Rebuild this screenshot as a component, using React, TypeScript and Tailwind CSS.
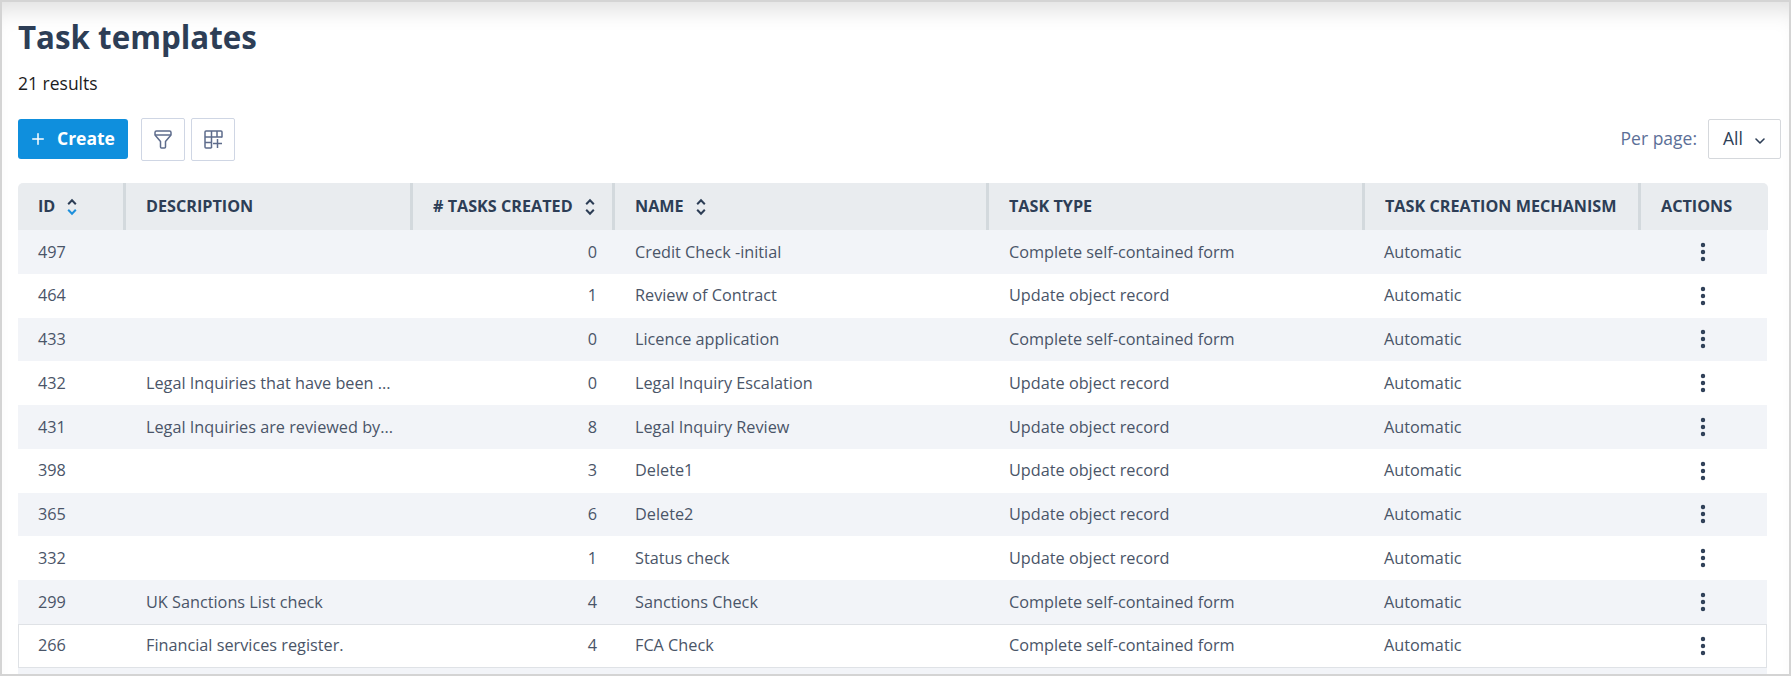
import { ChevronDown, EllipsisVertical, Plus } from "lucide-react";
import React from "react";

const cols = "grid-cols-[108px_287px_202px_374px_376px_276px_126px]";

const rows = [
  ["497", "", "0", "Credit Check -initial", "Complete self-contained form"],
  ["464", "", "1", "Review of Contract", "Update object record"],
  ["433", "", "0", "Licence application", "Complete self-contained form"],
  ["432", "Legal Inquiries that have been ...", "0", "Legal Inquiry Escalation", "Update object record"],
  ["431", "Legal Inquiries are reviewed by...", "8", "Legal Inquiry Review", "Update object record"],
  ["398", "", "3", "Delete1", "Update object record"],
  ["365", "", "6", "Delete2", "Update object record"],
  ["332", "", "1", "Status check", "Update object record"],
  ["299", "UK Sanctions List check", "4", "Sanctions Check", "Complete self-contained form"],
  ["266", "Financial services register.", "4", "FCA Check", "Complete self-contained form"],
];

const SortIcon = ({ active }: { active?: boolean }) => (
  <svg width="10" height="18" viewBox="0 0 10 18" fill="none" strokeWidth="2" className="shrink-0">
    <path d="M1.2 6.2L5 2.2l3.8 4" stroke="#2d3e56" />
    <path d="M1.2 11.8l3.8 4 3.8-4" stroke={active ? "#1e90dc" : "#2d3e56"} />
  </svg>
);

const HeadCell = ({ label, sort, active, last }: { label: string; sort?: boolean; active?: boolean; last?: boolean }) => (
  <div
    className={`flex items-center gap-[12px] pl-[20px] text-[16.2px] font-bold text-[#2d3e56] ${last ? "" : "border-r-[3px] border-[#d3d9dd]"}`}
  >
    <span className="pb-[1px] whitespace-nowrap">{label}</span>
    {sort && <SortIcon active={active} />}
  </div>
);

export default function App() {
  return (
    <div className="h-[676px] overflow-hidden border-[2px] border-[#d4d4d4] bg-white pl-4 pr-[21px] font-['Open_Sans',sans-serif] shadow-[inset_0_22px_22px_-14px_rgba(0,0,0,0.13)]">
      <h1 className="pt-[15px] text-[31.3px] leading-[40px] font-bold text-[#2d3e56]">Task templates</h1>
      <p className="mt-[14px] text-[17.5px] leading-[24px] text-[#1c1c1c]">21 results</p>

      <div className="mt-[22px] flex h-[44px] items-center">
        <button className="flex h-[40px] w-[110px] items-center gap-[10px] rounded-[3px] bg-[#0f8fdd] pl-[11px] text-[17.5px] font-bold text-white">
          <Plus size={18} strokeWidth={2} />
          <span className="pb-[2px]">Create</span>
        </button>
        <button className="ml-[13px] flex h-[43px] w-[44px] items-center justify-center rounded-[2px] border border-[#cfd6e4] text-[#5e6c8c]">
          <svg width="18" height="19" viewBox="0 0 18 19" fill="none" stroke="currentColor" strokeWidth="1.5" strokeLinejoin="round">
            <path d="M1 2.5a1.5 1.5 0 0 1 1.5-1.5h13A1.5 1.5 0 0 1 17 2.5V5l-5.5 6.5V17a1 1 0 0 1-1 1h-3a1 1 0 0 1-1-1v-5.5L1 5z" />
            <path d="M1 5h16" />
          </svg>
        </button>
        <button className="ml-[6px] flex h-[43px] w-[44px] items-center justify-center rounded-[2px] border border-[#cfd6e4] text-[#5e6c8c]">
          <svg width="19" height="19" viewBox="0 0 19 19" fill="none" stroke="currentColor" strokeWidth="1.5" strokeLinejoin="round">
            <path d="M7.5 18H2a1 1 0 0 1-1-1V2a1 1 0 0 1 1-1h15a1 1 0 0 1 1 1v5.5" />
            <path d="M1 7h17M1 12.5h6.5M7.5 1v17M13 1v6" />
            <path d="M13.5 9v9M9 13.5h9" />
          </svg>
        </button>
        <span className="ml-auto pb-[2px] text-[17.5px] text-[#5c6f97]">Per page:</span>
        <div className="mr-[-13px] ml-[11px] flex h-[40px] w-[73px] items-center gap-[9px] rounded-[2px] border border-[#d5d8dc] pl-[14px] text-[17.5px] text-[#2d3e56]">
          <span className="pb-[2px]">All</span>
          <ChevronDown size={16} strokeWidth={2.4} className="mt-[3px]" />
        </div>
      </div>

      <div className={`mt-[22px] grid h-[47px] ${cols} rounded-t-[5px] bg-[#e9ecef]`}>
        <HeadCell label="ID" sort active />
        <HeadCell label="DESCRIPTION" />
        <HeadCell label="# TASKS CREATED" sort />
        <HeadCell label="NAME" sort />
        <HeadCell label="TASK TYPE" />
        <HeadCell label="TASK CREATION MECHANISM" />
        <HeadCell label="ACTIONS" last />
      </div>

      {rows.map((row, i) => (
        <div
          key={row[0]}
          className={`grid h-[43.75px] w-[1749px] ${cols} items-center text-[16.25px] text-[#4a5568] ${i % 2 === 0 ? "bg-[#f2f4f8]" : "bg-white"} ${i === 9 ? "ring-1 ring-[#dfe2e6] ring-inset" : ""}`}
        >
          <div className="pl-[20px]">{row[0]}</div>
          <div className="whitespace-nowrap pl-[20px]">{row[1]}</div>
          <div className="pr-[18px] text-right">{row[2]}</div>
          <div className="pl-[20px]">{row[3]}</div>
          <div className="pl-[20px]">{row[4]}</div>
          <div className="pl-[19px]">Automatic</div>
          <div className="flex justify-center pr-[2px]">
            <EllipsisVertical size={24} strokeWidth={2.4} className="text-[#2d3e56]" />
          </div>
        </div>
      ))}
      <div className="h-[8px] w-[1749px] bg-[#f2f4f8]" />
    </div>
  );
}
